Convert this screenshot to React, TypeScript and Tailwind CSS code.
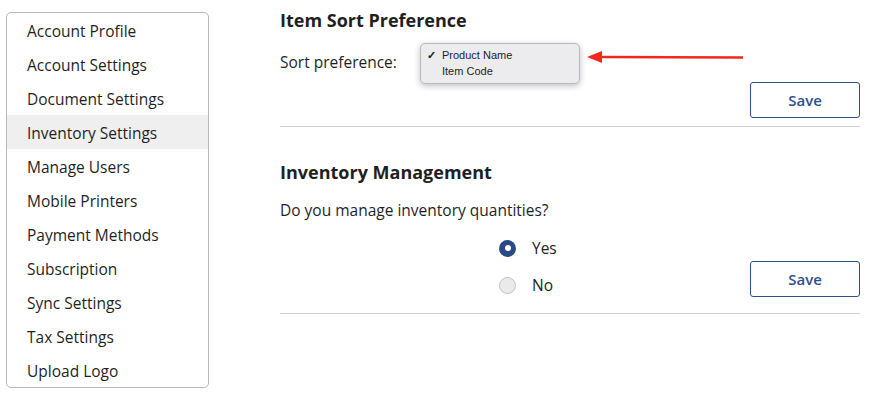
const menuItems = [
  'Account Profile',
  'Account Settings',
  'Document Settings',
  'Inventory Settings',
  'Manage Users',
  'Mobile Printers',
  'Payment Methods',
  'Subscription',
  'Sync Settings',
  'Tax Settings',
  'Upload Logo',
];

const SaveButton = () => (
  <button className="w-[110px] h-[36px] rounded-[3px] border border-[#2d4f8c] bg-white text-[15px] font-semibold text-[#2d4f8c]">
    Save
  </button>
);

const Radio = ({ checked, label }: { checked: boolean; label: string }) => (
  <label className="flex items-center h-[22px]">
    {checked ? (
      <span className="w-[17px] h-[17px] rounded-full bg-[#2a4a85] flex items-center justify-center">
        <span className="w-[6px] h-[6px] rounded-full bg-white" />
      </span>
    ) : (
      <span className="w-[17px] h-[17px] rounded-full bg-[#e9e9ee] border border-[#c4c4c8]" />
    )}
    <span className="ml-[16px] pt-[2px] text-[15.5px] font-medium text-[#222]">{label}</span>
  </label>
);

const App = () => {
  return (
    <div className="flex w-[870px] h-[396px] bg-white text-[#1f1f1f] font-['Open_Sans',sans-serif]">
      <div className="ml-[6px] mt-[12px] w-[203px] h-[376px] border border-[#b8b8b8] rounded-[5px] overflow-hidden">
        {menuItems.map((item) => (
          <div
            key={item}
            className={`h-[34px] pl-[20px] pt-[3px] flex items-center text-[15.5px] font-medium ${
              item === 'Inventory Settings' ? 'bg-[#efefef]' : ''
            }`}
          >
            {item}
          </div>
        ))}
      </div>

      <div className="ml-[71px] w-[580px] pt-[8px]">
        {/* item sort */}
        <div className="border-b border-[#cfcfcf] pb-[8px]">
          <h2 className="text-[18px] leading-[24px] font-bold">Item Sort Preference</h2>
          <div className="relative mt-[20px] h-[20px] flex items-center">
            <span className="text-[15.5px] leading-[20px] font-medium">Sort preference:</span>
            <div className="absolute left-[140px] top-[-9px] w-[160px] h-[41px] rounded-[5px] bg-[#ecebee] border border-[#b9b9bd] shadow-[0_2px_6px_rgba(0,0,0,0.25)] pt-[3px] font-['Liberation_Sans',sans-serif] text-[11px] leading-[16px] text-[#1e1e1e]">
              <div className="flex">
                <span className="w-[21px] pl-[6px] font-bold">✓</span>
                <span>Product Name</span>
              </div>
              <div className="pl-[21px]">Item Code</div>
            </div>
            <svg className="absolute left-[307px] top-[-5px]" width="160" height="20" viewBox="0 0 160 20">
              <line x1="12" y1="10" x2="156" y2="10.5" stroke="#f2281c" strokeWidth="2.6" />
              <polygon points="0,10 15,4 15,16" fill="#f2281c" />
            </svg>
          </div>
          <div className="flex justify-end mt-[10px]">
            <SaveButton />
          </div>
        </div>

        {/* inventory management */}
        <div className="border-b border-[#cfcfcf] pb-[16px]">
          <h2 className="mt-[33px] text-[18px] leading-[24px] font-bold">Inventory Management</h2>
          <p className="mt-[16px] text-[15.5px] leading-[20px] font-medium">Do you manage inventory quantities?</p>
          <div className="flex items-start">
            <div className="ml-[219px] mt-[17px] flex flex-col gap-[15px]">
              <Radio checked label="Yes" />
              <Radio checked={false} label="No" />
            </div>
            <div className="ml-auto mt-[41px]">
              <SaveButton />
            </div>
          </div>
        </div>
      </div>
    </div>
  );
};

export default App;
